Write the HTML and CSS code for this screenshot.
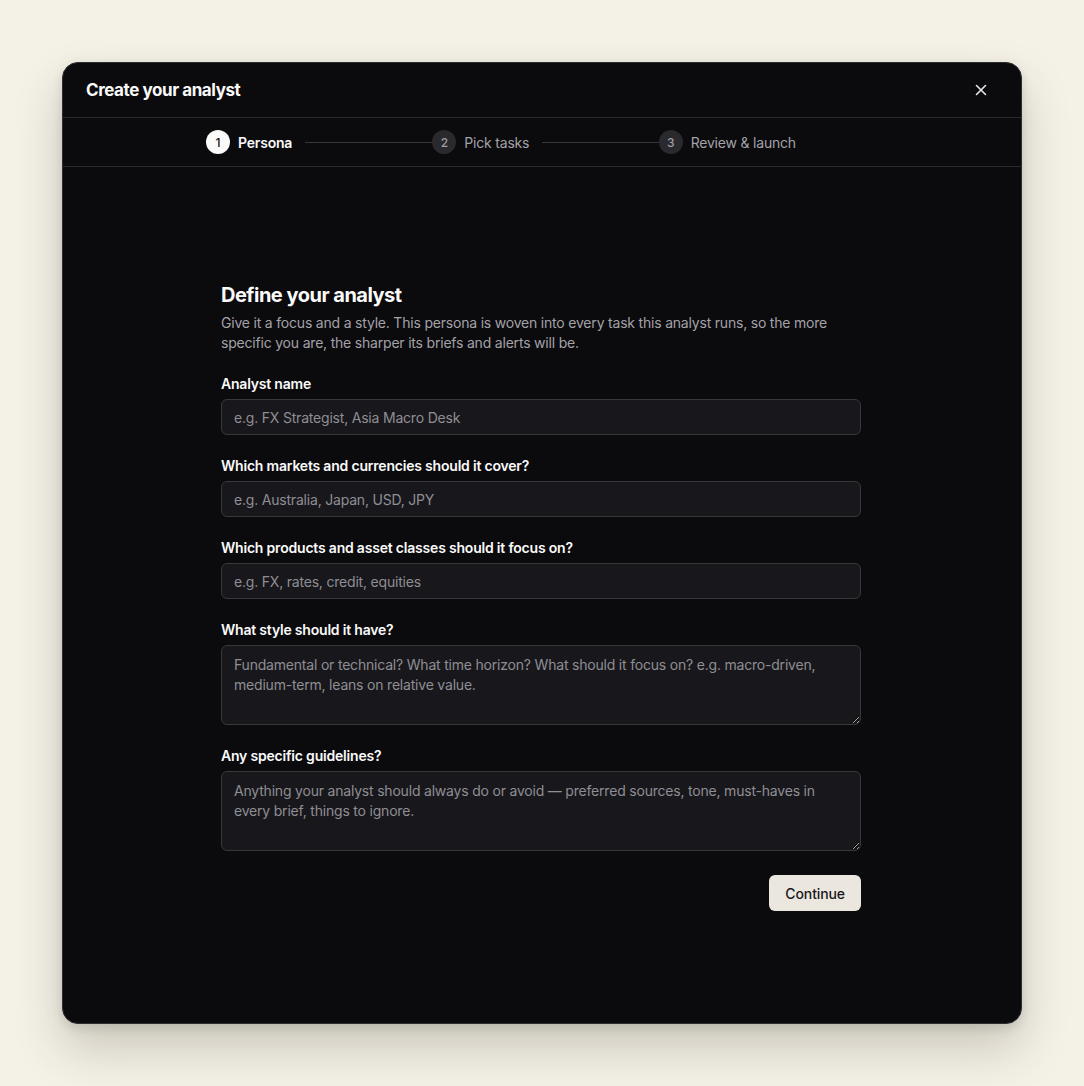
FILE: index.html
```html
<!DOCTYPE html>
<html lang="en">
<head>
<meta charset="utf-8">
<title>Create your analyst</title>
<link rel="stylesheet" href="styles.css">
</head>
<body>
<div class="modal">
  <header class="modal-header">
    <h1 class="modal-title">Create your analyst</h1>
    <button class="close-btn" aria-label="Close">
      <svg width="16" height="16" viewBox="0 0 16 16" fill="none" stroke="currentColor" stroke-width="1.6" stroke-linecap="round"><path d="M3.5 3.5l9 9M12.5 3.5l-9 9"/></svg>
    </button>
  </header>
  <nav class="stepper">
    <div class="steps">
      <div class="step active">
        <span class="step-num">1</span>
        <span class="step-label">Persona</span>
        <span class="step-line"></span>
      </div>
      <div class="step">
        <span class="step-num">2</span>
        <span class="step-label">Pick tasks</span>
        <span class="step-line"></span>
      </div>
      <div class="step">
        <span class="step-num">3</span>
        <span class="step-label">Review &amp; launch</span>
      </div>
    </div>
  </nav>
  <main class="modal-body">
    <form class="form">
      <h2 class="form-title">Define your analyst</h2>
      <p class="form-desc">Give it a focus and a style. This persona is woven into every task this analyst runs, so the more specific you are, the sharper its briefs and alerts will be.</p>
      <div class="fields">
        <label class="field">
          <span class="field-label">Analyst name</span>
          <input class="input" type="text" placeholder="e.g. FX Strategist, Asia Macro Desk">
        </label>
        <label class="field">
          <span class="field-label">Which markets and currencies should it cover?</span>
          <input class="input" type="text" placeholder="e.g. Australia, Japan, USD, JPY">
        </label>
        <label class="field">
          <span class="field-label">Which products and asset classes should it focus on?</span>
          <input class="input" type="text" placeholder="e.g. FX, rates, credit, equities">
        </label>
        <label class="field">
          <span class="field-label">What style should it have?</span>
          <textarea class="textarea" placeholder="Fundamental or technical? What time horizon? What should it focus on? e.g. macro-driven, medium-term, leans on relative value."></textarea>
        </label>
        <label class="field">
          <span class="field-label">Any specific guidelines?</span>
          <textarea class="textarea" placeholder="Anything your analyst should always do or avoid — preferred sources, tone, must-haves in every brief, things to ignore."></textarea>
        </label>
      </div>
      <div class="actions">
        <button type="button" class="btn-primary">Continue</button>
      </div>
    </form>
  </main>
</div>
</body>
</html>
```

FILE: styles.css
```css
* { box-sizing: border-box; }

html, body {
  margin: 0;
  padding: 0;
}

body {
  background: #f4f1e7;
  font-family: Inter, "Noto Sans", sans-serif;
  letter-spacing: -0.2px;
  min-height: 100vh;
  display: flex;
  align-items: center;
  justify-content: center;
  -webkit-font-smoothing: antialiased;
}

.modal {
  width: 960px;
  height: 962px;
  background: #0b0a0d;
  border: 1px solid #2e2d31;
  border-radius: 16px;
  box-shadow: 0 24px 48px rgba(60, 50, 30, 0.22), 0 4px 12px rgba(0, 0, 0, 0.12);
  display: flex;
  flex-direction: column;
  overflow: hidden;
  color: #fff;
}

.modal-header {
  height: 55px;
  display: flex;
  align-items: center;
  justify-content: space-between;
  padding: 0 24px 0 23px;
  border-bottom: 1px solid #2a292d;
  flex-shrink: 0;
}

.modal-title {
  margin: 0;
  font-size: 17px;
  font-weight: 700;
  letter-spacing: -0.025em;
  color: #fafafa;
}

.close-btn {
  background: none;
  border: 0;
  padding: 4px;
  margin-right: 4px;
  color: #e8e8ea;
  display: flex;
  cursor: pointer;
}

.stepper {
  height: 49px;
  border-bottom: 1px solid #2a292d;
  display: flex;
  align-items: center;
  padding: 0 136px 0 143px;
  flex-shrink: 0;
}

.steps {
  display: flex;
  align-items: center;
  width: 100%;
}

.step {
  flex: 1;
  display: flex;
  align-items: center;
  gap: 8px;
}

.step-num {
  width: 24px;
  height: 24px;
  border-radius: 50%;
  background: #2a292e;
  color: #9d9ca2;
  font-size: 12px;
  font-weight: 500;
  letter-spacing: 0;
  display: flex;
  align-items: center;
  justify-content: center;
  flex-shrink: 0;
}

.step-label {
  font-size: 14px;
  color: #a3a2a8;
  white-space: nowrap;
}

.step.active .step-num {
  background: #fafafa;
  color: #111;
}

.step.active .step-label {
  color: #fafafa;
  font-weight: 600;
}

.step-line {
  flex: 1;
  height: 1px;
  background: #37363b;
  margin: 0 0 0 5px;
}

.modal-body {
  flex: 1;
  display: flex;
  align-items: center;
  justify-content: center;
  padding-top: 2px;
}

.form {
  width: 640px;
  margin-left: -2px;
}

.form-title {
  margin: 0;
  font-size: 20px;
  line-height: 28px;
  font-weight: 700;
  letter-spacing: -0.025em;
  color: #fafafa;
}

.form-desc {
  margin: 4px 0 0;
  font-size: 14px;
  line-height: 20px;
  color: #a3a2a8;
}

.fields {
  margin-top: 21px;
  display: flex;
  flex-direction: column;
  gap: 21px;
}

.field {
  display: flex;
  flex-direction: column;
  gap: 5px;
}

.field-label {
  font-size: 14px;
  line-height: 20px;
  font-weight: 600;
  color: #fafafa;
}

.input,
.textarea {
  width: 100%;
  background: #18171b;
  border: 1px solid #38373c;
  border-radius: 6px;
  color: #fafafa;
  font-family: inherit;
  font-size: 14px;
  letter-spacing: -0.2px;
  outline: none;
}

.input {
  height: 36px;
  padding: 0 12px;
}

.textarea {
  height: 80px;
  padding: 9px 12px;
  line-height: 20px;
  resize: vertical;
  display: block;
}

.input::placeholder,
.textarea::placeholder {
  color: #8f8e94;
}

.actions {
  margin-top: 24px;
  display: flex;
  justify-content: flex-end;
}

.btn-primary {
  height: 36px;
  padding: 0 16px;
  background: #ebe7df;
  color: #18171b;
  border: 0;
  border-radius: 6px;
  font-family: inherit;
  font-size: 14px;
  font-weight: 500;
  letter-spacing: -0.1px;
  cursor: pointer;
}
```
